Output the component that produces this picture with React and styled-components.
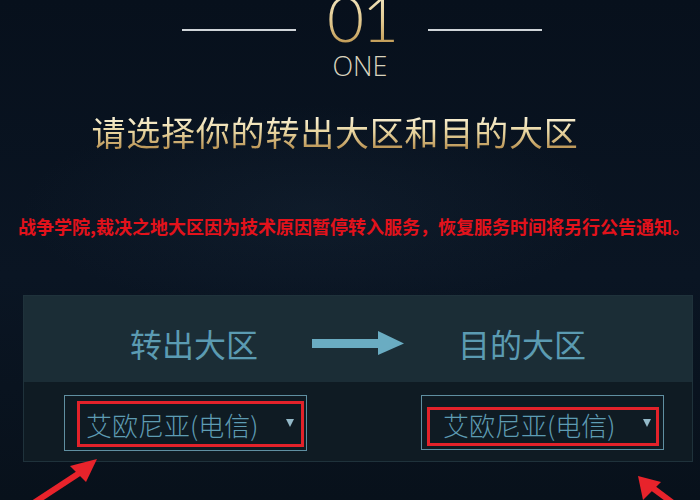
import styled, { createGlobalStyle } from "styled-components";

const GlobalStyle = createGlobalStyle`
  html, body {
    margin: 0;
    padding: 0;
    background: #08121e;
  }
`;

const Page = styled.div`
  position: relative;
  width: 700px;
  height: 500px;
  overflow: hidden;
  display: flex;
  flex-direction: column;
  align-items: center;
  background:
    radial-gradient(ellipse 60% 30% at 45% 42%, rgba(40, 60, 80, 0.18), transparent 70%),
    linear-gradient(180deg, #07101c 0%, #0a1523 55%, #08111b 100%);
  font-family: "Noto Sans CJK SC", "Noto Sans", sans-serif;
`;

const StepRow = styled.div`
  display: flex;
  align-items: flex-start;
  gap: 31px;
  margin-top: -14px;
  margin-left: 24px;
`;

const Rule = styled.div`
  width: 114px;
  height: 2px;
  background: #cfd4d8;
  margin-top: 43px;
`;

const StepNumber = styled.div`
  font-family: "Lato", "Open Sans", sans-serif;
  font-weight: 300;
  font-size: 64px;
  line-height: 1;
  letter-spacing: -2px;
  background: linear-gradient(180deg, #f6eed0 0%, #e2c98f 55%, #b88e45 100%);
  -webkit-background-clip: text;
  background-clip: text;
  color: transparent;
`;

const StepWord = styled.div`
  font-family: "Open Sans", "Lato", sans-serif;
  font-weight: 300;
  font-size: 27px;
  line-height: 1;
  color: #d9d3bd;
  margin-top: 2px;
  margin-left: 20px;
`;

const Title = styled.h1`
  margin: 36px 30px 0 0;
  font-size: 34px;
  line-height: 1;
  font-weight: 400;
  letter-spacing: 0.8px;
  background: linear-gradient(180deg, #fbf4dc 0%, #e8d5a0 50%, #b99252 100%);
  -webkit-background-clip: text;
  background-clip: text;
  color: transparent;
`;

const Notice = styled.p`
  margin: 68px 0 0 8px;
  font-size: 18px;
  line-height: 1;
  font-weight: 700;
  color: #e3121b;
  white-space: nowrap;
`;

const Panel = styled.div`
  margin: 60px 0 0 16px;
  width: 668px;
  display: flex;
  flex-direction: column;
  border: 1px solid #1f323b;
`;

const PanelHead = styled.div`
  height: 86px;
  background: #1b2d36;
  display: flex;
  align-items: center;
  justify-content: center;
  gap: 54px;
  padding-top: 8px;
  box-sizing: border-box;
`;

const Label = styled.div`
  font-size: 32px;
  line-height: 1;
  color: #5b9bb2;
`;

const PanelBody = styled.div`
  height: 79px;
  background: #0f1b23;
  display: flex;
  justify-content: space-between;
  align-items: flex-start;
  padding: 13px 28px 0 40px;
  box-sizing: border-box;
`;

const Select = styled.div`
  position: relative;
  width: 243px;
  height: ${(p) => p.$height}px;
  box-sizing: border-box;
  border: 1px solid #5f8fa1;
  display: flex;
  align-items: center;
  justify-content: space-between;
  padding: 0 12px 0 21px;
`;

const SelectText = styled.span`
  font-size: 26px;
  line-height: 1;
  font-weight: 300;
  color: #5e9cb3;
  margin-top: ${(p) => p.$shift}px;
`;

const Caret = styled.span`
  width: 0;
  height: 0;
  border-left: 4px solid transparent;
  border-right: 4px solid transparent;
  border-top: 8px solid #93b9c8;
  margin-top: ${(p) => p.$shift - 4}px;
`;

/* red marker frame drawn over the select */
const Highlight = styled.div`
  position: absolute;
  top: ${(p) => p.$top}px;
  left: ${(p) => p.$left}px;
  right: ${(p) => p.$right}px;
  bottom: ${(p) => p.$bottom}px;
  border: 3px solid #e3222a;
  pointer-events: none;
`;

const Marks = styled.svg`
  position: absolute;
  left: 0;
  top: 0;
  pointer-events: none;
`;

const FlowArrow = () => (
  <svg width="92" height="26" viewBox="0 0 92 26">
    <rect x="0" y="9" width="68" height="9" fill="#6aacc2" />
    <polygon points="66,1 92,13.5 66,25" fill="#6aacc2" />
  </svg>
);

const RegionSelect = ({ height, shift, frame }) => (
  <Select $height={height}>
    <SelectText $shift={shift}>艾欧尼亚(电信)</SelectText>
    <Caret $shift={shift} />
    <Highlight {...frame} />
  </Select>
);

export default function App() {
  return (
    <>
      <GlobalStyle />
      <Page>
        <StepRow>
          <Rule />
          <StepNumber>01</StepNumber>
          <Rule />
        </StepRow>
        <StepWord>ONE</StepWord>
        <Title>请选择你的转出大区和目的大区</Title>
        <Notice>战争学院,裁决之地大区因为技术原因暂停转入服务，恢复服务时间将另行公告通知。</Notice>
        <Panel>
          <PanelHead>
            <Label>转出大区</Label>
            <FlowArrow />
            <Label>目的大区</Label>
          </PanelHead>
          <PanelBody>
            <RegionSelect
              height={56}
              shift={3}
              frame={{ $top: 5, $left: 12, $right: 2, $bottom: 3 }}
            />
            <RegionSelect
              height={55}
              shift={5}
              frame={{ $top: 11, $left: 5, $right: 4, $bottom: 3 }}
            />
          </PanelBody>
        </Panel>
        <Marks width="700" height="500" viewBox="0 0 700 500">
          <g fill="#e8232b" stroke="#e8232b">
            <line x1="26" y1="508" x2="84" y2="470" strokeWidth="6" />
            <polygon points="97,459 70,466 86,482" stroke="none" />
            <line x1="685" y1="512" x2="650" y2="486" strokeWidth="6" />
            <polygon points="638,476 643,500 661,482" stroke="none" />
          </g>
        </Marks>
      </Page>
    </>
  );
}
